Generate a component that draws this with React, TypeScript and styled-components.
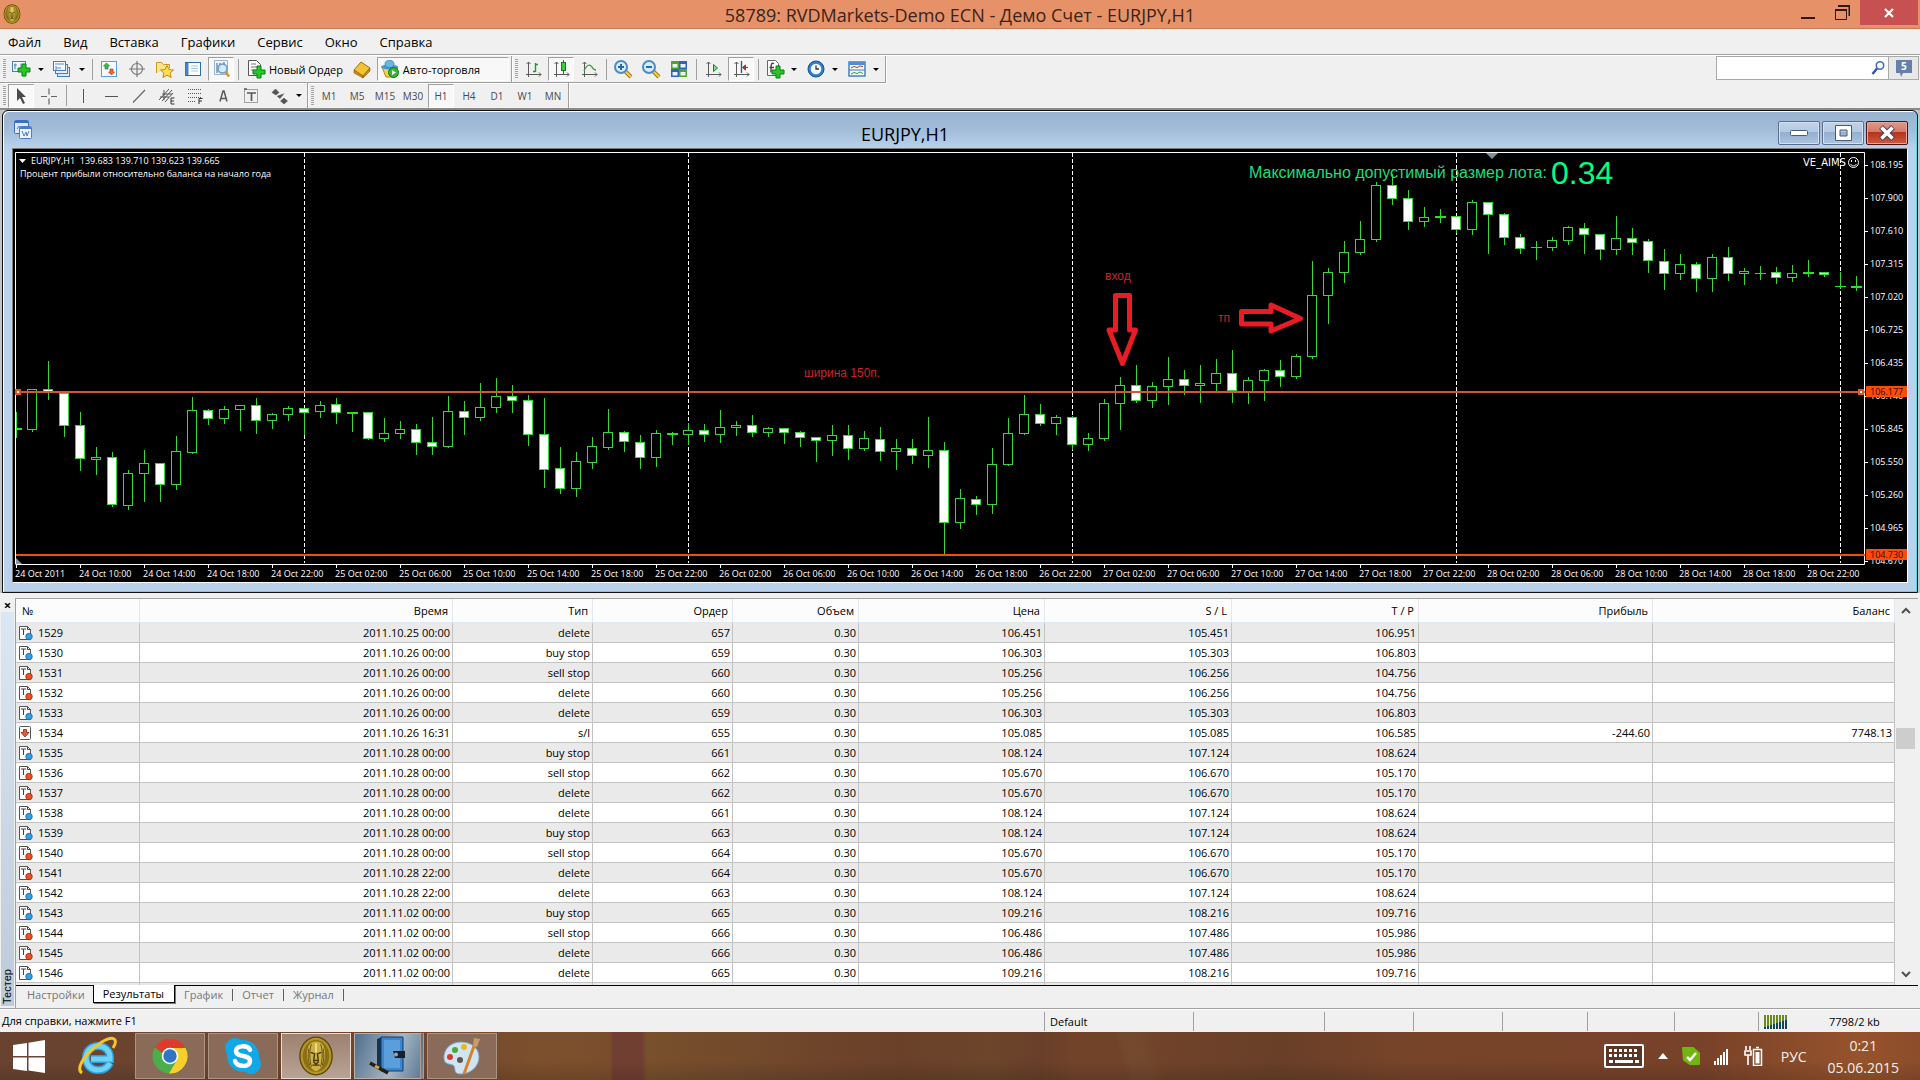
import React from 'react';
import styled, { createGlobalStyle, css } from 'styled-components';

const UI = "'Open Sans', 'Noto Sans', sans-serif";
const ARIAL = "'Liberation Sans', Arial, sans-serif";

const GlobalStyle = createGlobalStyle`
  * { box-sizing: border-box; }
  body { margin: 0; background: #f0f0f0; font-family: ${UI}; color: #000; }
  button, input { font-family: inherit; }
  button { border: 0; background: none; padding: 0; margin: 0; color: inherit; }
  svg { display: block; }
`;

const Screen = styled.div`
  display: flex;
  flex-direction: column;
  height: 100vh;
  overflow: hidden;
`;

/* ---------- application title ---------- */
const TitleBar = styled.header`
  display: grid;
  grid-template-columns: 1fr auto 1fr;
  flex: none;
  height: 29px;
  background: #e79168;
  border-bottom: 1px solid #c97a56;
`;
const AppIcon = styled.div`
  padding: 4px 0 0 3px;
`;
const AppTitle = styled.h1`
  margin: 0;
  font-size: 18px;
  line-height: 30px;
  font-weight: 400;
  color: #3a2419;
`;
const WindowControls = styled.div`
  display: flex;
  justify-content: flex-end;
  padding-right: 2px;
`;
const ControlButton = styled.button<{ $close?: boolean }>`
  display: flex;
  align-items: center;
  justify-content: center;
  width: ${p => (p.$close ? 58 : 35)}px;
  height: 25px;
  background: ${p => (p.$close ? '#c75050' : 'transparent')};
`;

/* ---------- menu and toolbars ---------- */
const MenuBar = styled.nav`
  display: flex;
  flex: none;
  height: 26px;
  border-bottom: 1px solid #a0a0a0;
`;
const MenuItem = styled.button`
  padding: 0 11px;
  font-size: 13px;
  line-height: 24px;
  &:first-child { padding-left: 8px; }
`;
const ToolRow = styled.div<{ $first?: boolean }>`
  display: flex;
  flex: none;
  height: ${p => (p.$first ? 28 : 25)}px;
  border-top: ${p => (p.$first ? '1px solid #fff' : 0)};
`;
const ToolGroup = styled.div<{ $flat?: boolean }>`
  display: flex;
  align-items: center;
  gap: 2px;
  padding-right: 2px;
  border-right: 1px solid #a0a0a0;
  border-bottom: ${p => (p.$flat ? 0 : '1px solid #a0a0a0')};
  box-shadow: 1px ${p => (p.$flat ? 0 : 1)}px 0 #fff;
`;
const Grip = styled.span`
  width: 3px;
  height: 20px;
  margin: 0 0 0 3px;
  background: repeating-linear-gradient(#a3a3a3 0 1px, #f0f0f0 1px 2px);
`;
const Separator = styled.span`
  width: 1px;
  height: 21px;
  margin: 0 1px 0 2px;
  background: #a0a0a0;
`;
const pressed = css`
  background: #f8f8f8;
  border: 1px solid;
  border-color: #a0a0a0 #fff #fff #a0a0a0;
`;
const ToolButton = styled.button<{ $on?: boolean }>`
  display: flex;
  align-items: center;
  justify-content: center;
  width: 26px;
  height: 24px;
  font-size: 10px;
  color: #4a4a4a;
  ${p => p.$on && pressed}
`;
const WideButton = styled.button<{ $on?: boolean }>`
  display: flex;
  align-items: center;
  gap: 3px;
  height: 24px;
  padding: 0 4px;
  font-size: 11px;
  white-space: nowrap;
  ${p => p.$on && pressed}
  ${p => p.$on && 'width: 132px; padding: 0 2px;'}
`;
const DropArrow = styled.button`
  display: flex;
  justify-content: center;
  width: 13px;
  margin-left: -2px;
  &::after {
    content: '';
    border: 3px solid transparent;
    border-top-color: #000;
    border-bottom: 0;
  }
`;
const SearchBox = styled.form`
  display: flex;
  width: 203px;
  height: 24px;
  margin: 0 1px 0 auto;
  border: 1px solid #a9a9a9;
  background: #fff;
`;
const SearchInput = styled.input`
  flex: 1;
  min-width: 0;
  border: 0;
  padding: 0 4px;
  font-size: 12px;
`;
const SearchButton = styled.button<{ $chat?: boolean }>`
  display: flex;
  align-items: center;
  justify-content: center;
  width: ${p => (p.$chat ? 30 : 20)}px;
  background: ${p => (p.$chat ? '#e8e8e8' : '#fff')};
  border-left: ${p => (p.$chat ? '1px solid #a9a9a9' : 0)};
`;

/* ---------- chart window ---------- */
const Workspace = styled.main`
  flex: none;
  padding: 0 2px;
  background: #c4c4c4;
  border-top: 2px solid #8a8a8a;
`;
const ChartWindow = styled.section`
  border: 1px solid #101010;
  border-radius: 6px 6px 0 0;
  padding: 0 9px 9px;
  background: linear-gradient(#9ab3d1 0, #a3bddb 20px, #b9d1ea 37px, #b9d1ea 100%);
  box-shadow: inset 1px 1px 0 #fff, inset -1px -1px 0 #5fd3ea;
`;
const ChartTitleBar = styled.header`
  display: flex;
  align-items: center;
  height: 37px;
  padding: 0 0 0 2px;
`;
const ChartTitle = styled.h2`
  flex: 1;
  margin: 0;
  font-size: 18px;
  line-height: 24px;
  font-weight: 400;
  padding-top: 9px;
  text-align: center;
`;
const ChartButtons = styled.div`
  display: flex;
  justify-content: flex-end;
  gap: 2px;
  padding-top: 6px;
`;
const ChartButton = styled.button<{ $close?: boolean }>`
  display: flex;
  align-items: center;
  justify-content: center;
  width: 42px;
  height: 24px;
  border: 1px solid ${p => (p.$close ? '#4e1219' : '#5b6f8c')};
  border-radius: 2px;
  box-shadow: inset 0 0 0 1px ${p => (p.$close ? '#e5a79d' : '#d3e1f1')};
  background: ${p =>
    p.$close
      ? 'linear-gradient(#e09a8c 0, #d47a69 45%, #b5321c 46%, #cf5a3c 100%)'
      : 'linear-gradient(#c0d3e9 0, #b4c9e2 45%, #94aecd 46%, #abc4e0 100%)'};
`;
const ChartFrame = styled.div`
  border: 1px solid;
  border-color: #7c7c7c #fff #fff #7c7c7c;
  background: #000;
  svg { width: 100%; height: auto; }
`;

/* ---------- tester panel ---------- */
const Tester = styled.section`
  display: flex;
  flex: 1;
  min-height: 0;
  padding: 5px 2px 0 0;
`;
const SideStrip = styled.aside`
  display: flex;
  flex-direction: column;
  width: 15px;
  flex: none;
`;
const StripClose = styled.button`
  height: 14px;
  font-size: 13px;
  line-height: 10px;
  font-weight: 700;
`;
const StripLabel = styled.div`
  flex: 1;
  margin: 0 1px 2px;
  padding-top: 2px;
  background: linear-gradient(to top, #dae7f5, #bdcad9);
  writing-mode: vertical-rl;
  transform: rotate(180deg);
  font: 11px/13px ${ARIAL};
`;
const TesterBody = styled.div`
  display: flex;
  flex: 1;
  flex-direction: column;
  min-width: 0;
  border: 1px solid #a0a0a0;
  border-width: 1px 0 0 1px;
`;
const TableArea = styled.div`
  display: flex;
  flex: 1;
  min-height: 0;
  overflow: hidden;
`;
const Results = styled.table`
  flex: 1;
  height: max-content;
  border-collapse: separate;
  border-spacing: 0;
  table-layout: fixed;
  width: 100%;
  font-size: 11px;
`;
const HeadCell = styled.th`
  height: 24px;
  padding: 0 4px 0 6px;
  font-weight: 400;
  text-align: right;
  background: #fcfcfc;
  border-right: 1px solid #e3e9f3;
  border-bottom: 1px solid #e3e9f3;
  &:first-child { text-align: left; }
`;
const Row = styled.tr<{ $alt: boolean }>`
  background: ${p => (p.$alt ? '#eaeaea' : '#fff')};
`;
const Cell = styled.td`
  height: 20px;
  padding: 0 2px 0 3px;
  line-height: 17px;
  text-align: right;
  white-space: nowrap;
  border-right: 1px solid #c3c3c3;
  border-bottom: 1px solid #c3c3c3;
`;
const OrderNo = styled.span`
  display: flex;
  align-items: center;
  gap: 5px;
`;
const ScrollBar = styled.div`
  display: flex;
  flex-direction: column;
  flex: none;
  width: 23px;
  padding: 0 3px 0 1px;
`;
const ScrollArrow = styled.button`
  display: flex;
  align-items: center;
  justify-content: center;
  height: 22px;
`;
const ScrollTrack = styled.div`
  display: flex;
  flex: 1;
  flex-direction: column;
  justify-content: flex-start;
  padding-top: 107px;
`;
const ScrollThumb = styled.div`
  height: 21px;
  background: #cdcdcd;
`;
const Tabs = styled.nav`
  display: flex;
  flex: none;
  height: 23px;
  border-top: 1px solid #000;
`;
const Tab = styled.button<{ $active?: boolean }>`
  position: relative;
  height: 18px;
  padding: 0 10px 0 9px;
  font-size: 11px;
  line-height: 16px;
  color: #767676;
  &:first-child { padding: 0 8px 0 11px; }
  &:not(:first-child)::after {
    content: '';
    position: absolute;
    right: 0;
    top: 3px;
    height: 12px;
    border-right: 1px solid #5f5f5f;
  }
  ${p => p.$active && css`
    margin-top: -1px;
    color: #000;
    background: #fff;
    border: solid #000;
    border-width: 0 1px 1px;
    box-shadow: 1px 1px 0 #777;
    &:not(:first-child)::after { display: none; }
  `}
`;

/* ---------- status bar ---------- */
const StatusBar = styled.footer`
  display: flex;
  flex: none;
  align-items: stretch;
  height: 24px;
  border-top: 1px solid #a0a0a0;
  box-shadow: inset 0 1px 0 #fff;
  font-size: 11px;
  line-height: 22px;
`;
const StatusText = styled.div`
  flex: 1;
  padding: 1px 0 0 2px;
`;
const StatusCell = styled.div<{ $w: number }>`
  display: flex;
  align-items: center;
  gap: 41px;
  width: ${p => p.$w}px;
  margin: 3px 0 1px;
  padding-left: 5px;
  border-left: 1px solid #a0a0a0;
`;

/* ---------- task bar ---------- */
const TaskBar = styled.footer`
  display: flex;
  flex: none;
  height: 48px;
  background: linear-gradient(#0000 60%, #0002),
    linear-gradient(74deg, #0000 1084px, #78583544 1090px, #78583544 1108px, #0000 1120px),
    linear-gradient(90deg, #6a4330 0, #6e4630 420px, #7d502c 540px, #7a4e2d 610px, #713f31 613px,
      #713f31 642px, #78502d 647px, #6a4029 900px, #6c452b 990px, #693f29 1040px, #71442a 1075px,
      #71442a 1135px, #693f28 1280px, #764429 1400px, #784229 1700px, #96532c 1860px, #8c4d2b 100%);
`;
const taskWidths = { start: 58, pinned: 71, run: 70, active: 70, blue: 70 };
const TaskButton = styled.button<{ $kind: keyof typeof taskWidths }>`
  display: flex;
  align-items: center;
  justify-content: center;
  width: ${p => taskWidths[p.$kind]}px;
  margin: 1px 3px 1px 0;
  ${p => p.$kind === 'run' && 'background: #8a6a58; border: 1px solid #ab9484;'}
  ${p => p.$kind === 'active' && 'background: linear-gradient(#9d8170, #b9a295); border: 1px solid #e6dcd5;'}
  ${p => p.$kind === 'blue' && 'background: linear-gradient(110deg, #4f6f8d, #a6b6c4 60%, #5f7c98); border: 1px solid #b8b0a8; border-right: 4px double #b09c8e;'}
`;
const Tray = styled.div`
  display: flex;
  align-items: center;
  gap: 14px;
  margin-left: auto;
  padding-right: 21px;
  color: #f6eee9;
  font-size: 14px;
`;
const Language = styled.span`
  margin-left: 4px;
`;
const Clock = styled.time`
  margin-left: 7px;
  padding-top: 2px;
  line-height: 22px;
  text-align: center;
`;

/* ---------- icons ---------- */
const Ic = ({ children, size = 20 }: { children: React.ReactNode; size?: number }) => (
  <svg width={size} height={size} viewBox="0 0 20 20" fill="none" aria-hidden="true">{children}</svg>
);
const Plus = ({ x, y }: { x: number; y: number }) => (
  <path transform={`translate(${x} ${y})`} d="M4 0h4v4h4v4H8v4H4V8H0V4h4z" fill="#26c826" stroke="#0b7d14" />
);
const Axes = () => (
  <path d="M5.500 3v15M3.500 5l2-2 2 2M3 15.500h15M16 13.500l2 2-2 2" stroke="#5a5a5a" />
);
const Lens = ({ minus }: { minus?: boolean }) => (
  <>
    <path d="M12 12l6 6" stroke="#a87808" strokeWidth="4" />
    <path d="M12 12l6 6" stroke="#f4cf4e" strokeWidth="2" />
    <circle cx="8" cy="8" r="6" fill="#d5ecfb" stroke="#4c8bc8" strokeWidth="2" />
    <path d={minus ? 'M5 8h6' : 'M5 8h6M8 5v6'} stroke="#2a68a8" strokeWidth="2" />
  </>
);

const icons: Record<string, React.ReactNode> = {
  newChart: <><rect x="1.500" y="2.500" width="13" height="10" fill="#eef6ff" stroke="#4a7db5" /><path d="M4 4.500v6M3 6h3M10 4.500v5" stroke="#4a7db5" /><Plus x={7} y={5} /></>,
  profiles: <><rect x="5.500" y="8.500" width="12" height="9" fill="#d9e9f9" stroke="#4a7db5" /><rect x="3.500" y="5.500" width="12" height="9" fill="#e3effb" stroke="#4a7db5" /><rect x="1.500" y="2.500" width="12" height="9" fill="#f4f9ff" stroke="#4a7db5" /><path d="M3 5h9M4 9h5M4 7v4" stroke="#5e8fc4" /></>,
  market: <><rect x="2.500" y="2.500" width="15" height="15" fill="#f3f9ff" stroke="#5aa0d8" /><path d="M7.500 4l3 3h-1.500v3h-3V7H4.500z" fill="#3dbb3d" stroke="#168016" strokeWidth=".6" /><path d="M12.500 16l3-3H14v-3h-3v3H9.500z" fill="#f0633c" stroke="#b52c10" strokeWidth=".6" /></>,
  navigator: <><circle cx="10" cy="10" r="5.500" stroke="#777" strokeWidth="1.200" /><path d="M10 2v16M2 10h16" stroke="#777" strokeWidth="1.200" /></>,
  folder: <><path d="M1.500 14V3.500h5l2 2h6V9" fill="#fbe38a" stroke="#c79a22" /><path d="M12 6.500l2 4 4.500.5-3.300 3 .9 4.500-4.100-2.300-4.100 2.300.9-4.500-3.300-3 4.500-.5z" fill="#ffdf4a" stroke="#c08c10" /></>,
  terminal: <><rect x="2.500" y="3.500" width="15" height="13" fill="#fff" stroke="#2f6cab" /><path d="M4 4v12" stroke="#3f86cc" strokeWidth="3" /><path d="M8 7h7M8 9.500h7M8 12h7" stroke="#a9c6e4" /></>,
  tester: <><path d="M3.500 1.500h13v14h-13z" fill="#eef5fc" stroke="#9ab4cd" /><path d="M6 4v10M9 4v6M13 3v4" stroke="#6484a6" strokeWidth="1.300" /><circle cx="11.500" cy="9.500" r="4.500" fill="#cfe6f8cc" stroke="#6f97bf" strokeWidth="1.500" /><path d="M14.500 13l3.500 4.500" stroke="#c89a3c" strokeWidth="2.600" /></>,
  order: <><path d="M2.500 1.500h8l4 4v11h-12z" fill="#fff" stroke="#555" /><path d="M5 5h5M5 8h7M5 11h4" stroke="#777" /><Plus x={7} y={7} /></>,
  book: <><path d="M2 11l7-8 9 6-7 8z" fill="#f2c335" stroke="#a56b0c" /><path d="M2 11v3l9 5v-2zM11 17v2l7-7V9z" fill="#c98c1c" stroke="#8f5c08" strokeWidth=".6" /></>,
  auto: <><path d="M2 8l4 10h9l3-10z" fill="#f6d347" stroke="#b48a18" /><ellipse cx="9.500" cy="8" rx="8.500" ry="2.600" fill="#3f9bd8" /><ellipse cx="9.500" cy="5" rx="4.500" ry="3.600" fill="#66b7e8" stroke="#2c78b4" strokeWidth=".7" /><circle cx="13.500" cy="13.500" r="5" fill="#35b935" stroke="#0e7b12" /><path d="M12 11v5l4-2.500z" fill="#fff" /></>,
  bars: <><Axes /><path d="M12.500 4v9M10 12.500h2.500M12.500 5.500H15" stroke="#1c9a2a" strokeWidth="1.400" /></>,
  candles: <><Axes /><path d="M12.500 1v14" stroke="#127d1c" /><rect x="10.500" y="3.500" width="4" height="8" fill="#35d23d" stroke="#127d1c" /></>,
  line: <><Axes /><path d="M5 12c3-7 6-7 8-4 1 2 3 3 4 3" stroke="#3a9d44" strokeWidth="1.300" /></>,
  zoomIn: <Lens />,
  zoomOut: <Lens minus />,
  tile: <><path d="M2 2h8v8H2z" fill="#4fa526" /><path d="M10 2h8v8h-8z" fill="#2f62c4" /><path d="M2 10h8v8H2z" fill="#2f62c4" /><path d="M10 10h8v8h-8z" fill="#4fa526" /><path d="M3.500 5h5v3.500h-5zM11.500 5h5v3.500h-5zM3.500 13h5v3.500h-5zM11.500 13h5v3.500h-5z" fill="#e8f3ff" /></>,
  autoscroll: <><Axes /><path d="M10.500 5.500v7l4-3.500z" fill="#7fdc85" stroke="#178a22" /></>,
  shift: <><Axes /><path d="M10.500 2v12" stroke="#2a5c8a" strokeWidth="1.400" /><path d="M17 8.500h-4M14.500 6l-3 2.500 3 2.500z" stroke="#a83414" fill="#a83414" /></>,
  indicator: <><path d="M2.500 1.500h8l3 3v12h-11z" fill="#fff" stroke="#666" /><path d="M9 4.500c-3-1-3 1-3 9M4.500 8.500H9" stroke="#444" strokeWidth="1.400" /><Plus x={7} y={7} /></>,
  clock: <><circle cx="10" cy="10" r="8" fill="#2f7fd0" stroke="#174f96" /><circle cx="10" cy="10" r="5.300" fill="#f4f9ff" /><path d="M10 6.500V10h3" stroke="#333" strokeWidth="1.300" /></>,
  template: <><rect x="2" y="3" width="16" height="14" fill="#f6fbff" stroke="#3e79b7" strokeWidth="1.400" /><path d="M2 4.500h16" stroke="#4f90d2" strokeWidth="3" /><path d="M2 11h16" stroke="#3e79b7" /><path d="M4 9l3-1.500 3 1 3-1.500 3 .5" stroke="#b1392a" /><path d="M4 15l3-1.500 3 1 3-1.500 3 1.500" stroke="#2f9a3d" /></>,
  cursor: <path d="M6 2v13l3-3 3 6 2-1-3-6h4z" fill="#4a4a4a" />,
  cross: <path d="M10 2.500v6M10 12.500v6M2 10.500h6M12 10.500h6" stroke="#666" strokeWidth="1.200" />,
  vline: <path d="M10.500 3v14" stroke="#555" />,
  hline: <path d="M4 10.500h13" stroke="#555" />,
  diag: <path d="M4 16.500L16 4" stroke="#666" strokeWidth="1.200" />,
  channel: <><path d="M2 14L12 3M5 15L15 4M8 16l8-9M3 11h9M5 8h10M7 4v10" stroke="#555" /><path d="M17.500 12h-3.500v6h3.500M14 15h3" stroke="#333" /></>,
  fibo: <><path d="M3 3.500h14M3 7.500h14M3 11.500h14M3 15.500h8" stroke="#555" strokeDasharray="1 1" /><path d="M17.500 12.500H14V18M14 15h3" stroke="#333" /></>,
  text: <path d="M7 15.500L10 5h1l3 10.500M8 12.500h5" stroke="#5a5a5a" strokeWidth="1.500" />,
  label: <><rect x="3.500" y="3.500" width="13" height="13" stroke="#555" strokeDasharray="1 1" /><path d="M6 7h9M10.500 7v8M3 3h3" stroke="#5a5a5a" strokeWidth="1.700" /></>,
  shapes: <path d="M6.500 3l3.500 3.500-3 2.500L3 6.500zM8 10l3 2.500 4-5M15 12l3.500 3-3.500 3-3.500-3z" fill="#555" stroke="#555" strokeWidth=".6" />,
};

const Tool = ({ name, label, on }: { name: string; label: string; on?: boolean }) => (
  <ToolButton $on={on} aria-label={label}><Ic>{icons[name]}</Ic></ToolButton>
);

const Lion = ({ w, h }: { w: number; h: number }) => (
  <svg width={w} height={h} viewBox="0 0 38 44" aria-hidden="true">
    <ellipse cx="19" cy="22" rx="18.500" ry="21.500" fill="#5a4708" />
    <ellipse cx="19" cy="22" rx="17" ry="20" fill="#b3962a" />
    <ellipse cx="19" cy="22" rx="14.500" ry="17.500" fill="#8a6f14" />
    <path d="M19 6c-7 0-10 6-10 14s3 16 10 19c7-3 10-11 10-19S26 6 19 6z" fill="#cdb043" />
    <path d="M14 9c-3 8-2 17 0 25M24 9c3 8 2 17 0 25M11 14c-1 7-1 12 1 18M27 14c1 7 1 12-1 18" stroke="#5f4a08" fill="none" />
    <path d="M13 18l4 1.500M25 18l-4 1.500M17.500 19l-1 8h5l-1-8M16 28l3 3 3-3M15 32h8" stroke="#4a3904" strokeWidth="1.500" fill="none" />
    <path d="M19 8v10" stroke="#f0de84" strokeWidth="2" />
  </svg>
);

/* ---------- chart data ---------- */
// [body top, body bottom, wick top, wick bottom, kind]: w bearish, h bullish, d doji
type Candle = [number, number, number, number, string];
const third = (base: number, rows: Candle[]): Candle[] =>
  rows.map(([a, b, c, d, k]) => [base + Math.round(a / 3), base + Math.round(b / 3), base + Math.round(c / 3), base + Math.round(d / 3), k]);

const candles: Candle[] = [
  ...third(340, [
    [266, 266, 216, 290, 'd'], [148, 269, 148, 272, 'h'], [148, 160, 63, 177, 'w'], [158, 257, 157, 288, 'w'],
    [256, 356, 216, 390, 'w'], [352, 359, 321, 402, 'h'], [352, 494, 336, 497, 'w'], [400, 497, 390, 507, 'h'],
    [370, 402, 330, 483, 'h'], [370, 434, 370, 483, 'w'], [334, 434, 288, 447, 'h'], [211, 338, 171, 338, 'h'],
    [211, 237, 208, 251, 'w'], [208, 236, 198, 249, 'h'], [196, 209, 196, 270, 'h'], [196, 242, 174, 279, 'w'],
    [223, 242, 219, 264, 'h'], [205, 224, 198, 240, 'h'], [205, 218, 205, 282, 'w'], [196, 215, 183, 231, 'h'],
    [193, 218, 174, 249, 'w'], [219, 219, 216, 273, 'd'], [217, 296, 217, 296, 'w'], [280, 296, 234, 303, 'h'],
    [268, 281, 243, 294, 'h'], [268, 308, 252, 342, 'w'], [307, 320, 231, 342, 'w'], [214, 320, 168, 320, 'h'],
    [214, 233, 183, 282, 'w'], [202, 233, 129, 240, 'h'], [169, 203, 114, 216, 'h'], [169, 182, 135, 216, 'w'],
    [181, 284, 165, 315, 'w'], [283, 389, 174, 441, 'w'], [385, 446, 321, 459, 'w'], [364, 446, 336, 468, 'h'],
    [319, 368, 291, 384, 'h'], [277, 323, 207, 327, 'h'], [277, 305, 273, 333, 'w'], [307, 353, 285, 384, 'w'],
    [280, 353, 270, 378, 'h'], [282, 282, 276, 312, 'd'], [271, 284, 249, 312, 'h'], [271, 284, 252, 303, 'w'],
    [262, 284, 210, 306, 'h'], [256, 263, 243, 285, 'h'], [256, 278, 225, 288, 'w'], [265, 278, 261, 288, 'h'],
    [265, 278, 265, 309, 'w'], [277, 293, 273, 318, 'w'], [292, 302, 292, 363, 'w'], [286, 302, 255, 345, 'h'],
    [286, 326, 255, 357, 'w'], [295, 326, 273, 330, 'h'], [298, 335, 261, 360, 'w'], [325, 335, 297, 387, 'h'],
    [325, 347, 297, 369, 'w'], [331, 347, 231, 381, 'h'], [331, 548, 306, 642, 'w'], [475, 548, 447, 564, 'h'],
    [478, 494, 468, 522, 'w'], [373, 494, 324, 519, 'h'], [280, 374, 234, 374, 'h'], [223, 281, 165, 281, 'h'],
    [223, 251, 192, 255, 'w'], [232, 251, 225, 282, 'h'], [232, 314, 228, 326, 'w'], [295, 314, 279, 330, 'h'],
    [190, 296, 177, 300, 'h'], [136, 191, 111, 267, 'h'], [136, 182, 75, 186, 'w'], [139, 182, 126, 201, 'h'],
    [118, 140, 51, 192, 'h'], [118, 137, 90, 162, 'w'], [130, 137, 75, 186, 'h'], [100, 131, 57, 150, 'h'],
    [100, 154, 30, 186, 'w'], [121, 156, 111, 189, 'h'], [91, 122, 87, 180, 'h'],
  ]),
  ...third(150, [
    [661, 680, 630, 708, 'w'], [619, 681, 612, 684, 'h'], [436, 620, 333, 624, 'h'], [367, 437, 354, 519, 'h'],
    [307, 369, 273, 396, 'h'], [268, 308, 213, 312, 'h'], [106, 269, 96, 273, 'h'], [106, 147, 72, 162, 'w'],
    [145, 215, 120, 237, 'w'], [202, 215, 171, 228, 'h'], [201, 201, 177, 216, 'd'], [199, 239, 199, 246, 'w'],
    [157, 239, 150, 252, 'h'], [157, 194, 157, 309, 'w'], [193, 263, 189, 282, 'w'], [262, 296, 252, 309, 'w'],
    [292, 292, 273, 327, 't'], [271, 293, 261, 300, 'h'], [232, 272, 228, 282, 'h'], [235, 254, 219, 309, 'w'],
    [253, 299, 253, 327, 'w'], [265, 299, 198, 312, 'h'], [265, 278, 234, 312, 'w'], [274, 334, 267, 366, 'w'],
    [334, 371, 297, 417, 'w'], [343, 371, 312, 387, 'h'], [343, 386, 336, 423, 'w'], [322, 386, 312, 423, 'h'],
    [322, 371, 291, 390, 'w'], [364, 371, 354, 402, 'h'], [368, 368, 348, 387, 't'], [367, 383, 351, 399, 'w'],
    [370, 383, 345, 393, 'h'], [369, 369, 330, 378, 'd'], [367, 374, 367, 378, 'w'], [409, 409, 366, 413, 't'],
    [411, 411, 378, 420, 'd'],
  ]),
];

const priceLabels = ['108.195', '107.900', '107.610', '107.315', '107.020', '106.725', '106.435', '106.140', '105.845', '105.550', '105.260', '104.965', '104.670'];
const timeLabels = ['24 Oct 2011', ...['24 Oct 10', '24 Oct 14', '24 Oct 18', '24 Oct 22',
  ...['25', '26', '27', '28'].flatMap(d => ['02', '06', '10', '14', '18', '22'].map(h => `${d} Oct ${h}`))].map(s => `${s}:00`)];
const daySeparators = [304, 688, 1072, 1456, 1840];
const GREEN = '#3ed43e';

const Level = ({ y, color, price }: { y: number; color: string; price: string }) => (
  <>
    <rect x="16" y={y - 1} width="1849" height="2" fill={color} />
    <rect x="1866" y={y - 6} width="41" height="11" fill="#ff4a08" />
    <text x="1870" y={y + 3} fontSize="9" fill="#2b0d00">{price}</text>
  </>
);

const PriceChart = () => (
  <svg viewBox="13 149 1894 433" fontFamily={UI} role="img" aria-label="EURJPY,H1">
    <rect x="13" y="149" width="1894" height="433" fill="#000" />
    {daySeparators.map(x => (
      <path key={x} d={`M${x + 0.5} 153V563`} stroke="#fff" strokeDasharray="4 2" />
    ))}
    <g shapeRendering="crispEdges">
      {candles.map(([top, bottom, high, low, kind], i) => {
        const x = 16 + i * 16;
        const flat = kind === 'd' || kind === 't';
        const left = i === 0 ? x : x - 5;
        return (
          <g key={i}>
            <rect x={x} y={high} width="1" height={low - high + 1} fill={GREEN} />
            {flat
              ? <rect x={left} y={top - (kind === 'd' ? 1 : 0)} width={x + 6 - left} height={kind === 'd' ? 2 : 1} fill="#23e623" />
              : <rect x={x - 4.5} y={top + 0.5} width="9" height={Math.max(bottom - top - 1, 1)} fill={kind === 'w' ? '#fff' : '#000'} stroke={GREEN} />}
          </g>
        );
      })}
    </g>
    <path d="M15.500 564V152.500H1864.500V564.500H15.500" stroke="#fff" fill="none" />
    <path d="M16 558v6h6z" fill="#8796a0" />
    <path d="M1486 153h12l-6 6z" fill="#7f8f9c" />
    {priceLabels.map((label, i) => (
      <g key={label}>
        <path d={`M1865 ${165.5 + i * 33}h3`} stroke="#fff" />
        <text x="1870" y={168 + i * 33} fontSize="9" fill="#fff">{label}</text>
      </g>
    ))}
    {timeLabels.map((label, i) => (
      <g key={label}>
        <path d={`M${16.5 + i * 64} 565v3`} stroke="#fff" />
        <text x={15 + i * 64} y="577" fontSize="9" fill="#fff">{label}</text>
      </g>
    ))}
    <Level y={392} color="#cc5a30" price="106.177" />
    <Level y={555} color="#f04f12" price="104.730" />
    <rect x="16" y="390" width="4" height="4" fill="#fff" stroke="#e2531f" strokeWidth="2" />
    <rect x="1859" y="390" width="4" height="4" fill="#fff" stroke="#e2531f" strokeWidth="2" />
    <path d="M19 159h7l-3.500 4z" fill="#fff" />
    <text x="31" y="164" fontSize="9" fill="#fff">{'EURJPY,H1\u00a0 139.683 139.710 139.623 139.665'}</text>
    <text x="20" y="177" fontSize="9" fill="#fff">Процент прибыли относительно баланса на начало года</text>
    <text x="1803" y="166" fontSize="10" fill="#fff" fontFamily="'DejaVu Sans', sans-serif">VE_AIMS</text>
    <g stroke="#fff" fill="none">
      <circle cx="1853.500" cy="162.500" r="5" />
      <path d="M1850.500 164c1.500 2.500 4.500 2.500 6 0M1851.500 160v2M1855.500 160v2" />
    </g>
    <g fontFamily={ARIAL}>
      <text x="1249" y="178" fontSize="16" fill="#1fdc7c">Максимально допустимый размер лота:</text>
      <text x="1551" y="184" fontSize="32" fill="#00ff80">0.34</text>
      <g fontSize="12" fill="#cf2328">
        <text x="1105" y="280">вход</text>
        <text x="1218" y="322">тп</text>
        <text x="804" y="377">ширина 150п.</text>
      </g>
    </g>
    <g fill="none" stroke="#e81c24" strokeWidth="5">
      <path d="M1115.500 295.500h14v34.500h6l-13 33.500-13.500-33.500h6.500z" strokeLinejoin="round" />
      <path d="M1241.500 311.500h29.500v-6.500l29.500 13.500-29.500 12.500v-7h-29.500z" strokeLinejoin="round" />
    </g>
  </svg>
);

/* ---------- table data ---------- */
const columns = ['№', 'Время', 'Тип', 'Ордер', 'Объем', 'Цена', 'S / L', 'T / P', 'Прибыль', 'Баланс'];
const widths = [124, 313, 140, 140, 126, 186, 187, 187, 234];
type Order = [number, string, string, string, string, string, string, string];
const orders: Order[] = [
  [1529, 'b', '2011.10.25 00:00', 'delete', '657', '106.451', '105.451', '106.951'],
  [1530, 'b', '2011.10.26 00:00', 'buy stop', '659', '106.303', '105.303', '106.803'],
  [1531, 'r', '2011.10.26 00:00', 'sell stop', '660', '105.256', '106.256', '104.756'],
  [1532, 'r', '2011.10.26 00:00', 'delete', '660', '105.256', '106.256', '104.756'],
  [1533, 'b', '2011.10.26 00:00', 'delete', '659', '106.303', '105.303', '106.803'],
  [1534, 's', '2011.10.26 16:31', 's/l', '655', '105.085', '105.085', '106.585'],
  [1535, 'b', '2011.10.28 00:00', 'buy stop', '661', '108.124', '107.124', '108.624'],
  [1536, 'r', '2011.10.28 00:00', 'sell stop', '662', '105.670', '106.670', '105.170'],
  [1537, 'r', '2011.10.28 00:00', 'delete', '662', '105.670', '106.670', '105.170'],
  [1538, 'b', '2011.10.28 00:00', 'delete', '661', '108.124', '107.124', '108.624'],
  [1539, 'b', '2011.10.28 00:00', 'buy stop', '663', '108.124', '107.124', '108.624'],
  [1540, 'r', '2011.10.28 00:00', 'sell stop', '664', '105.670', '106.670', '105.170'],
  [1541, 'r', '2011.10.28 22:00', 'delete', '664', '105.670', '106.670', '105.170'],
  [1542, 'b', '2011.10.28 22:00', 'delete', '663', '108.124', '107.124', '108.624'],
  [1543, 'b', '2011.11.02 00:00', 'buy stop', '665', '109.216', '108.216', '109.716'],
  [1544, 'r', '2011.11.02 00:00', 'sell stop', '666', '106.486', '107.486', '105.986'],
  [1545, 'r', '2011.11.02 00:00', 'delete', '666', '106.486', '107.486', '105.986'],
  [1546, 'b', '2011.11.02 00:00', 'delete', '665', '109.216', '108.216', '109.716'],
];

const OrderIcon = ({ kind }: { kind: string }) => (
  <svg width="14" height="16" viewBox="0 0 14 16" fill="none" aria-hidden="true">
    {kind === 's' ? (
      <>
        <rect x=".5" y="1.500" width="11" height="13" rx="1" fill="#fff" stroke="#555" />
        <path d="M4.500 4.500h3v3h2.500L6 12 2 7.500h2.500z" fill="#ee5a2a" stroke="#8e2408" strokeWidth=".8" />
      </>
    ) : (
      <>
        <path d="M.5 1.500h8l3 3v10H.5z" fill="#fff" stroke="#555" />
        <path d="M8.500 1.500v3h3M2 4h5M4.500 4v6" stroke="#444" />
        <circle cx="10" cy="11.500" r="3.300" fill={kind === 'b' ? '#2ea0e6' : '#ee4f1e'} stroke={kind === 'b' ? '#145f9e' : '#9a2606'} strokeWidth=".7" />
      </>
    )}
  </svg>
);

/* ---------- page ---------- */
export default function App() {
  return (
    <Screen>
      <GlobalStyle />
      <TitleBar>
        <AppIcon><Lion w={18} h={20} /></AppIcon>
        <AppTitle>58789: RVDMarkets-Demo ECN - Демо Счет - EURJPY,H1</AppTitle>
        <WindowControls>
          <ControlButton aria-label="Свернуть"><svg width="14" height="14"><path d="M0 12h14" stroke="#2b1b14" strokeWidth="2" /></svg></ControlButton>
          <ControlButton aria-label="Восстановить">
            <svg width="15" height="15" fill="none"><path d="M.5 4.500h11v10H.5z" stroke="#2b1b14" /><path d="M0 5h12M3 1h12M14.500 0v11" stroke="#2b1b14" strokeWidth="2" /></svg>
          </ControlButton>
          <ControlButton $close aria-label="Закрыть"><svg width="10" height="10"><path d="M1 1l8 8M9 1L1 9" stroke="#fff" strokeWidth="2.200" /></svg></ControlButton>
        </WindowControls>
      </TitleBar>

      <MenuBar>
        {['Файл', 'Вид', 'Вставка', 'Графики', 'Сервис', 'Окно', 'Справка'].map(m => <MenuItem key={m}>{m}</MenuItem>)}
      </MenuBar>

      <ToolRow $first>
        <ToolGroup>
          <Grip />
          <Tool name="newChart" label="Новый график" /><DropArrow aria-label="Список графиков" />
          <Tool name="profiles" label="Профили" /><DropArrow aria-label="Список профилей" />
          <Separator />
          <Tool name="market" label="Обзор рынка" />
          <Tool name="navigator" label="Окно данных" />
          <Tool name="folder" label="Навигатор" />
          <Tool name="terminal" label="Терминал" />
          <Tool name="tester" label="Тестер стратегий" on />
          <Separator />
          <WideButton><Ic>{icons.order}</Ic>Новый Ордер</WideButton>
          <Tool name="book" label="MetaEditor" />
          <WideButton $on><Ic>{icons.auto}</Ic>Авто-торговля</WideButton>
        </ToolGroup>
        <ToolGroup>
          <Grip />
          <Tool name="bars" label="Бары" />
          <Tool name="candles" label="Свечи" on />
          <Tool name="line" label="Линия" />
          <Separator />
          <Tool name="zoomIn" label="Увеличить" />
          <Tool name="zoomOut" label="Уменьшить" />
          <Tool name="tile" label="Окна мозаикой" />
          <Separator />
          <Tool name="autoscroll" label="Автопрокрутка" />
          <Tool name="shift" label="Сдвиг графика" on />
          <Separator />
          <Tool name="indicator" label="Индикаторы" /><DropArrow aria-label="Список индикаторов" />
          <Tool name="clock" label="Период" /><DropArrow aria-label="Список периодов" />
          <Tool name="template" label="Шаблоны" /><DropArrow aria-label="Список шаблонов" />
        </ToolGroup>
        <SearchBox>
          <SearchInput type="text" aria-label="Поиск" />
          <SearchButton type="button" aria-label="Найти">
            <svg width="14" height="14" fill="none"><circle cx="9" cy="4.500" r="3.700" stroke="#3c6fc4" strokeWidth="1.600" /><path d="M6 7.500L1.500 13" stroke="#2c55b0" strokeWidth="2.400" /></svg>
          </SearchButton>
          <SearchButton type="button" $chat aria-label="Сообщения">
            <svg width="16" height="17"><path d="M0 0h16v13H7l-2 4-1-4H0z" fill="#6680ac" /><text x="5" y="10" fontSize="10" fontWeight="700" fill="#fff">5</text></svg>
          </SearchButton>
        </SearchBox>
      </ToolRow>

      <ToolRow>
        <ToolGroup $flat>
          <Grip />
          <Tool name="cursor" label="Курсор" on />
          <Tool name="cross" label="Перекрестие" />
          <Separator />
          <Tool name="vline" label="Вертикальная линия" />
          <Tool name="hline" label="Горизонтальная линия" />
          <Tool name="diag" label="Трендовая линия" />
          <Tool name="channel" label="Канал" />
          <Tool name="fibo" label="Фибоначчи" />
          <Tool name="text" label="Текст" />
          <Tool name="label" label="Метка" />
          <Tool name="shapes" label="Стрелки" /><DropArrow aria-label="Список стрелок" />
        </ToolGroup>
        <ToolGroup $flat>
          <Grip />
          {['M1', 'M5', 'M15', 'M30', 'H1', 'H4', 'D1', 'W1', 'MN'].map(t => <ToolButton key={t} $on={t === 'H1'}>{t}</ToolButton>)}
        </ToolGroup>
      </ToolRow>

      <Workspace>
        <ChartWindow>
          <ChartTitleBar>
            <svg width="18" height="19" fill="none" aria-hidden="true">
              <rect x=".5" y=".5" width="14" height="13" rx="1" fill="#dce9fb" stroke="#3b6fc0" /><path d="M1 2h13" stroke="#3b6fc0" strokeWidth="2" /><path d="M3 9l2-3 2 2 2-2" stroke="#4a7ccb" />
              <rect x="5.500" y="6.500" width="12" height="12" rx="1" fill="#eef4ff" stroke="#4a7ccb" /><path d="M6 8h11" stroke="#4a7ccb" strokeWidth="2" /><path d="M8 11l2 5 2-4 1 4 2-5" stroke="#4a7ccb" />
            </svg>
            <ChartTitle>EURJPY,H1</ChartTitle>
            <ChartButtons>
              <ChartButton aria-label="Свернуть график"><svg width="18" height="8"><rect x=".5" y="1.500" width="17" height="5" rx="1" fill="#fff" stroke="#4b5a70" /></svg></ChartButton>
              <ChartButton aria-label="Развернуть график"><svg width="17" height="16"><path fillRule="evenodd" d="M.5.5h16v15H.5zM5 5v6h7V5z" fill="#fff" stroke="#4b5a70" /></svg></ChartButton>
              <ChartButton $close aria-label="Закрыть график"><svg width="18" height="16"><path d="M3 2l12 12M15 2L3 14" stroke="#444a5c" strokeWidth="5.500" /><path d="M3.500 2.500l11 11M14.500 2.500l-11 11" stroke="#fff" strokeWidth="3.500" /></svg></ChartButton>
            </ChartButtons>
          </ChartTitleBar>
          <ChartFrame><PriceChart /></ChartFrame>
        </ChartWindow>
      </Workspace>

      <Tester>
        <SideStrip>
          <StripClose aria-label="Закрыть тестер">×</StripClose>
          <StripLabel>Тестер</StripLabel>
        </SideStrip>
        <TesterBody>
          <TableArea>
            <Results>
              <colgroup>{widths.map((w, i) => <col key={i} width={w} />)}<col /></colgroup>
              <thead><tr>{columns.map(c => <HeadCell key={c}>{c}</HeadCell>)}</tr></thead>
              <tbody>
                {orders.map(([no, kind, time, type, order, price, sl, tp], i) => (
                  <Row key={no} $alt={i % 2 === 0}>
                    <Cell><OrderNo><OrderIcon kind={kind} />{no}</OrderNo></Cell>
                    {[time, type, order, '0.30', price, sl, tp, kind === 's' ? '-244.60' : '', kind === 's' ? '7748.13' : ''].map((v, j) => <Cell key={j}>{v}</Cell>)}
                  </Row>
                ))}
                <Row $alt>{columns.map(c => <Cell key={c} />)}</Row>
              </tbody>
            </Results>
            <ScrollBar>
              <ScrollArrow aria-label="Вверх"><svg width="10" height="7" fill="none"><path d="M1 6l4-4 4 4" stroke="#505050" strokeWidth="2" /></svg></ScrollArrow>
              <ScrollTrack><ScrollThumb /></ScrollTrack>
              <ScrollArrow aria-label="Вниз"><svg width="10" height="7" fill="none"><path d="M1 1l4 4 4-4" stroke="#505050" strokeWidth="2" /></svg></ScrollArrow>
            </ScrollBar>
          </TableArea>
          <Tabs>
            <Tab>Настройки</Tab>
            <Tab $active>Результаты</Tab>
            <Tab>График</Tab>
            <Tab>Отчет</Tab>
            <Tab>Журнал</Tab>
          </Tabs>
        </TesterBody>
      </Tester>

      <StatusBar>
        <StatusText>Для справки, нажмите F1</StatusText>
        <StatusCell $w={149}>Default</StatusCell>
        <StatusCell $w={131} />
        <StatusCell $w={89} />
        <StatusCell $w={89} />
        <StatusCell $w={85} />
        <StatusCell $w={87} />
        <StatusCell $w={84} />
        <StatusCell $w={162}>
          <svg width="24" height="14" aria-hidden="true">
            {[0, 1, 2, 3, 4, 5, 6, 7].map(i => (
              <g key={i}><rect x={i * 3} y="0" width="2" height={12 - i} fill="#6b8a1c" /><rect x={i * 3} y={12 - i} width="2" height={i + 2} fill="#12455e" /></g>
            ))}
          </svg>
          7798/2 kb
        </StatusCell>
      </StatusBar>

      <TaskBar>
        <TaskButton $kind="start" aria-label="Пуск">
          <svg width="32" height="33"><path d="M0 5l14-2v13H0zM15.500 2.700L32 0v16H15.500zM0 17.500h14V31L0 29zM15.500 17.500H32V33l-16.500-2.500z" fill="#fff" /></svg>
        </TaskButton>
        <TaskButton $kind="pinned" aria-label="Internet Explorer">
          <svg width="40" height="40" fill="none">
            <path d="M33 27c-2 4-6 7-12 7-7 0-12-5-12-12S14 10 21 10s12 5 12 11.500v1.500H14" stroke="#2c9fdc" strokeWidth="8" />
            <path d="M33 27c-2 4-6 7-12 7-7 0-12-5-12-12S14 10 21 10s12 5 12 11.500v1.500H14" stroke="#6fd2f7" strokeWidth="5" />
            <path d="M5 37c-6-4 1-16 12-25C27 3 36 0 38 4c1 2 0 5-2 8" stroke="#f5c628" strokeWidth="3" />
          </svg>
        </TaskButton>
        <TaskButton $kind="run" aria-label="Google Chrome">
          <svg width="36" height="36" viewBox="0 0 36 36">
            <circle cx="18" cy="18" r="17.500" fill="#4cae4a" />
            <path d="M2.800 9.300A17.500 17.500 0 0133.500 10H18a8 8 0 00-7.500 5z" fill="#df3a2e" />
            <path d="M33.500 10A17.500 17.500 0 0117 35.500L25 22a8 8 0 00-7-12z" fill="#f9cf2d" />
            <circle cx="18" cy="18" r="8.300" fill="#fff" /><circle cx="18" cy="18" r="6.700" fill="#2f74c5" />
          </svg>
        </TaskButton>
        <TaskButton $kind="run" aria-label="Skype">
          <svg width="38" height="38" viewBox="0 0 38 38">
            <circle cx="19" cy="19" r="16" fill="#10a8e8" /><circle cx="11" cy="11" r="10" fill="#10a8e8" /><circle cx="27" cy="27" r="10" fill="#10a8e8" />
            <path d="M26 13c-2-5-14-5-14 1 0 7 14 3 14 10 0 7-13 6-15 0" stroke="#fff" strokeWidth="4.500" fill="none" strokeLinecap="round" />
          </svg>
        </TaskButton>
        <TaskButton $kind="active" aria-label="MetaTrader"><Lion w={38} h={40} /></TaskButton>
        <TaskButton $kind="blue" aria-label="Журнал">
          <svg width="38" height="40" viewBox="0 0 38 40">
            <path d="M8 3l5-2v34l-5-3z" fill="#17324f" /><path d="M12 1h22v34H12z" fill="#3d86cb" stroke="#163a63" />
            <path d="M15 4h16v28H15z" fill="#5a9edb" /><path d="M24 15h12v7H26z" fill="#1a1f28" /><circle cx="27" cy="18.500" r="2" fill="#9aa8b5" />
            <path d="M1 27l18 10" stroke="#2a1c0e" strokeWidth="3.500" /><path d="M6 30l4 2" stroke="#d3a84f" strokeWidth="3" />
          </svg>
        </TaskButton>
        <TaskButton $kind="run" aria-label="Paint">
          <svg width="40" height="40" viewBox="0 0 40 40">
            <path d="M19 6C8 6 1 14 2 23c1 7 8 4 10 7 2 4-1 8 7 8 10 0 18-8 18-17S29 6 19 6z" fill="#cfe5f4" stroke="#7fa8c4" />
            <circle cx="8" cy="21" r="3" fill="#d63a2c" /><circle cx="13" cy="14" r="3" fill="#45a83c" /><circle cx="22" cy="11" r="3" fill="#f3b322" /><circle cx="18" cy="24" r="3" fill="#63554c" />
            <path d="M22 38l10-28" stroke="#d9822b" strokeWidth="3" /><path d="M31 10l1-8 6 1-3 8z" fill="#c99a6a" />
          </svg>
        </TaskButton>
        <Tray>
          <svg width="40" height="24" fill="none" aria-hidden="true">
            <rect x="1" y="1" width="38" height="22" rx="1" fill="#5b3624" stroke="#fff" strokeWidth="2" />
            <path d="M5 6.500h30M5 11.500h30" stroke="#fff" strokeWidth="3" strokeDasharray="3 2" /><path d="M5 17.500h30" stroke="#fff" strokeWidth="3" strokeDasharray="4 2 18 2" />
          </svg>
          <svg width="10" height="6" aria-hidden="true"><path d="M5 0l5 6H0z" fill="#fff" /></svg>
          <svg width="18" height="18" fill="none" aria-hidden="true"><path d="M1 1h10l6 5v11H8l-6-4z" fill="#72b512" stroke="#72b512" strokeWidth="2" strokeLinejoin="round" /><path d="M5 10l3 3 6-7" stroke="#fff" strokeWidth="2.500" /></svg>
          <svg width="16" height="17" aria-hidden="true">{[0, 1, 2, 3, 4].map(i => <rect key={i} x={i * 3} y={13 - i * 3} width="2" height={4 + i * 3} fill="#fff" />)}</svg>
          <svg width="19" height="20" fill="none" aria-hidden="true"><path d="M2 0v4M6 0v4M1 5h6v4H1zM4 9v10" stroke="#fff" strokeWidth="1.600" /><path d="M9.500 3.500h8v16h-8zM12 1.500h3" stroke="#fff" strokeWidth="1.500" /><path d="M11.500 6h4v11.500h-4z" fill="#fff" /></svg>
          <Language>РУС</Language>
          <Clock>0:21<br />05.06.2015</Clock>
        </Tray>
      </TaskBar>
    </Screen>
  );
}
